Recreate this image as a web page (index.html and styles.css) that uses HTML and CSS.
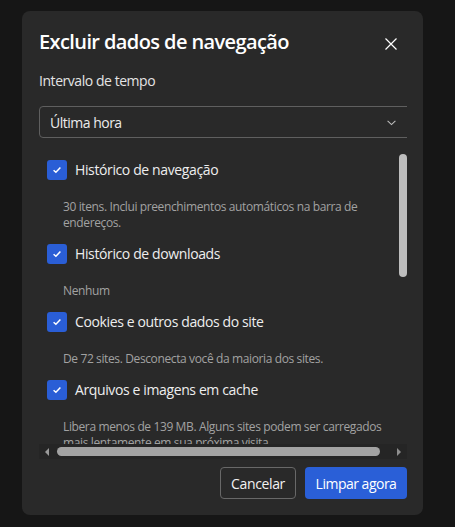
FILE: index.html
```html
<!DOCTYPE html>
<html lang="pt-BR">
<head>
<meta charset="utf-8">
<title>Excluir dados de navegação</title>
<link rel="stylesheet" href="styles.css">
</head>
<body>
<div class="dialog">
  <div class="header">
    <h1 class="title">Excluir dados de navegação</h1>
    <button class="close" aria-label="Fechar">
      <svg width="12" height="12" viewBox="0 0 12 12"><path d="M0.5 0.5L11.5 11.5M11.5 0.5L0.5 11.5" stroke="#ffffff" stroke-width="1.2" fill="none"/></svg>
    </button>
  </div>
  <div class="range-label">Intervalo de tempo</div>
  <div class="select-clip">
    <div class="select">
      <span>Última hora</span>
      <svg class="chev" width="9" height="6" viewBox="0 0 9 6"><path d="M0.6 0.8L4.5 4.6L8.4 0.8" stroke="#bdbdbd" stroke-width="1.1" fill="none"/></svg>
    </div>
  </div>
  <div class="scroll">
    <div class="list">
      <div class="item">
        <div class="row"><span class="cb"><svg width="10" height="8" viewBox="0 0 10 8"><path d="M1.6 4.2L3.9 6.3L8.4 1.6" stroke="#ffffff" stroke-width="1.5" fill="none"/></svg></span><span class="label">Histórico de navegação</span></div>
        <div class="desc">30 itens. Inclui preenchimentos automáticos na barra de<br>endereços.</div>
      </div>
      <div class="item">
        <div class="row"><span class="cb"><svg width="10" height="8" viewBox="0 0 10 8"><path d="M1.6 4.2L3.9 6.3L8.4 1.6" stroke="#ffffff" stroke-width="1.5" fill="none"/></svg></span><span class="label">Histórico de downloads</span></div>
        <div class="desc">Nenhum</div>
      </div>
      <div class="item">
        <div class="row"><span class="cb"><svg width="10" height="8" viewBox="0 0 10 8"><path d="M1.6 4.2L3.9 6.3L8.4 1.6" stroke="#ffffff" stroke-width="1.5" fill="none"/></svg></span><span class="label">Cookies e outros dados do site</span></div>
        <div class="desc">De 72 sites. Desconecta você da maioria dos sites.</div>
      </div>
      <div class="item">
        <div class="row"><span class="cb"><svg width="10" height="8" viewBox="0 0 10 8"><path d="M1.6 4.2L3.9 6.3L8.4 1.6" stroke="#ffffff" stroke-width="1.5" fill="none"/></svg></span><span class="label">Arquivos e imagens em cache</span></div>
        <div class="desc">Libera menos de 139 MB. Alguns sites podem ser carregados<br>mais lentamente em sua próxima visita.</div>
      </div>
    </div>
    <div class="vthumb"></div>
  </div>
  <div class="hbar">
    <svg width="4" height="8" viewBox="0 0 4 8"><path d="M4 0L0 4L4 8Z" fill="#9a9a9a"/></svg>
    <div class="hthumb"></div>
    <svg class="harrow-r" width="4" height="8" viewBox="0 0 4 8"><path d="M0 0L4 4L0 8Z" fill="#8e8e8e"/></svg>
  </div>
  <div class="actions">
    <button class="btn secondary">Cancelar</button>
    <button class="btn primary">Limpar agora</button>
  </div>
</div>
</body>
</html>
```
FILE: styles.css
```css
* { box-sizing: border-box; }
html, body { margin: 0; padding: 0; }
body {
  background: #161616;
  font-family: "Open Sans", "Noto Sans", sans-serif;
  color: #e8e8e8;
  width: 455px;
  height: 527px;
  overflow: hidden;
}
.dialog {
  margin: 11px 0 0 22px;
  width: 401px;
  height: 504px;
  background: #292929;
  border-radius: 8px;
  padding: 17px 16px 16px 17px;
  display: flex;
  flex-direction: column;
}
.header {
  display: flex;
  align-items: center;
  justify-content: space-between;
  height: 28px;
}
.title {
  margin: 0;
  font-size: 20px;
  line-height: 28px;
  font-weight: 600;
  color: #ffffff;
  letter-spacing: -0.6px;
}
.close {
  background: none;
  border: 0;
  padding: 0;
  margin: 4px 10px 0 0;
  width: 12px;
  height: 12px;
  display: flex;
}
.range-label {
  margin-top: 15px;
  font-size: 14px;
  line-height: 20px;
  color: #e4e4e4;
  letter-spacing: -0.45px;
}
.select-clip {
  margin-top: 15px;
  width: 368px;
  overflow: hidden;
}
.select {
  width: 374px;
  height: 32px;
  border: 1px solid #5f5f5f;
  border-radius: 4px;
  display: flex;
  align-items: center;
  justify-content: space-between;
  padding: 0 16px 0 10px;
  font-size: 14px;
  letter-spacing: -0.5px;
  color: #ececec;
}
.chev { margin-top: 1px; }
.scroll {
  position: relative;
  margin-top: 8px;
  height: 298px;
  width: 368px;
  overflow: hidden;
  padding: 14px 0 0 8px;
}
.list {
  display: flex;
  flex-direction: column;
  gap: 13px;
}
.row {
  display: flex;
  align-items: center;
  gap: 8px;
  height: 20px;
}
.cb {
  width: 20px;
  height: 20px;
  border-radius: 3px;
  background: #2a5ed6;
  display: flex;
  align-items: center;
  justify-content: center;
  flex: none;
}
.label {
  font-size: 14px;
  line-height: 20px;
  color: #eeeeee;
  white-space: nowrap;
  letter-spacing: -0.38px;
}
.desc {
  margin-top: 19px;
  padding-left: 16px;
  font-size: 12px;
  line-height: 16px;
  color: #a2a2a2;
  white-space: nowrap;
  letter-spacing: -0.38px;
}
.vthumb {
  position: absolute;
  top: 8px;
  right: 0;
  width: 8px;
  height: 123px;
  border-radius: 4px;
  background: #bdbdbd;
}
.hbar {
  width: 368px;
  height: 15px;
  background: #252525;
  display: flex;
  align-items: center;
  padding-left: 6px;
}
.hthumb {
  margin-left: 8px;
  width: 323px;
  height: 9px;
  border-radius: 4.5px;
  background: #a3a3a3;
}
.harrow-r { margin-left: 17px; }
.actions {
  margin-top: 8px;
  display: flex;
  justify-content: flex-end;
  gap: 9px;
}
.btn {
  height: 32px;
  border-radius: 4px;
  font-family: inherit;
  font-size: 14px;
  padding: 0;
  cursor: pointer;
}
.secondary {
  width: 76px;
  background: transparent;
  border: 1px solid #686868;
  color: #f2f2f2;
  letter-spacing: -0.35px;
}
.primary {
  width: 102px;
  background: #2a5fd7;
  border: 0;
  color: #ffffff;
  letter-spacing: -0.5px;
}
```
